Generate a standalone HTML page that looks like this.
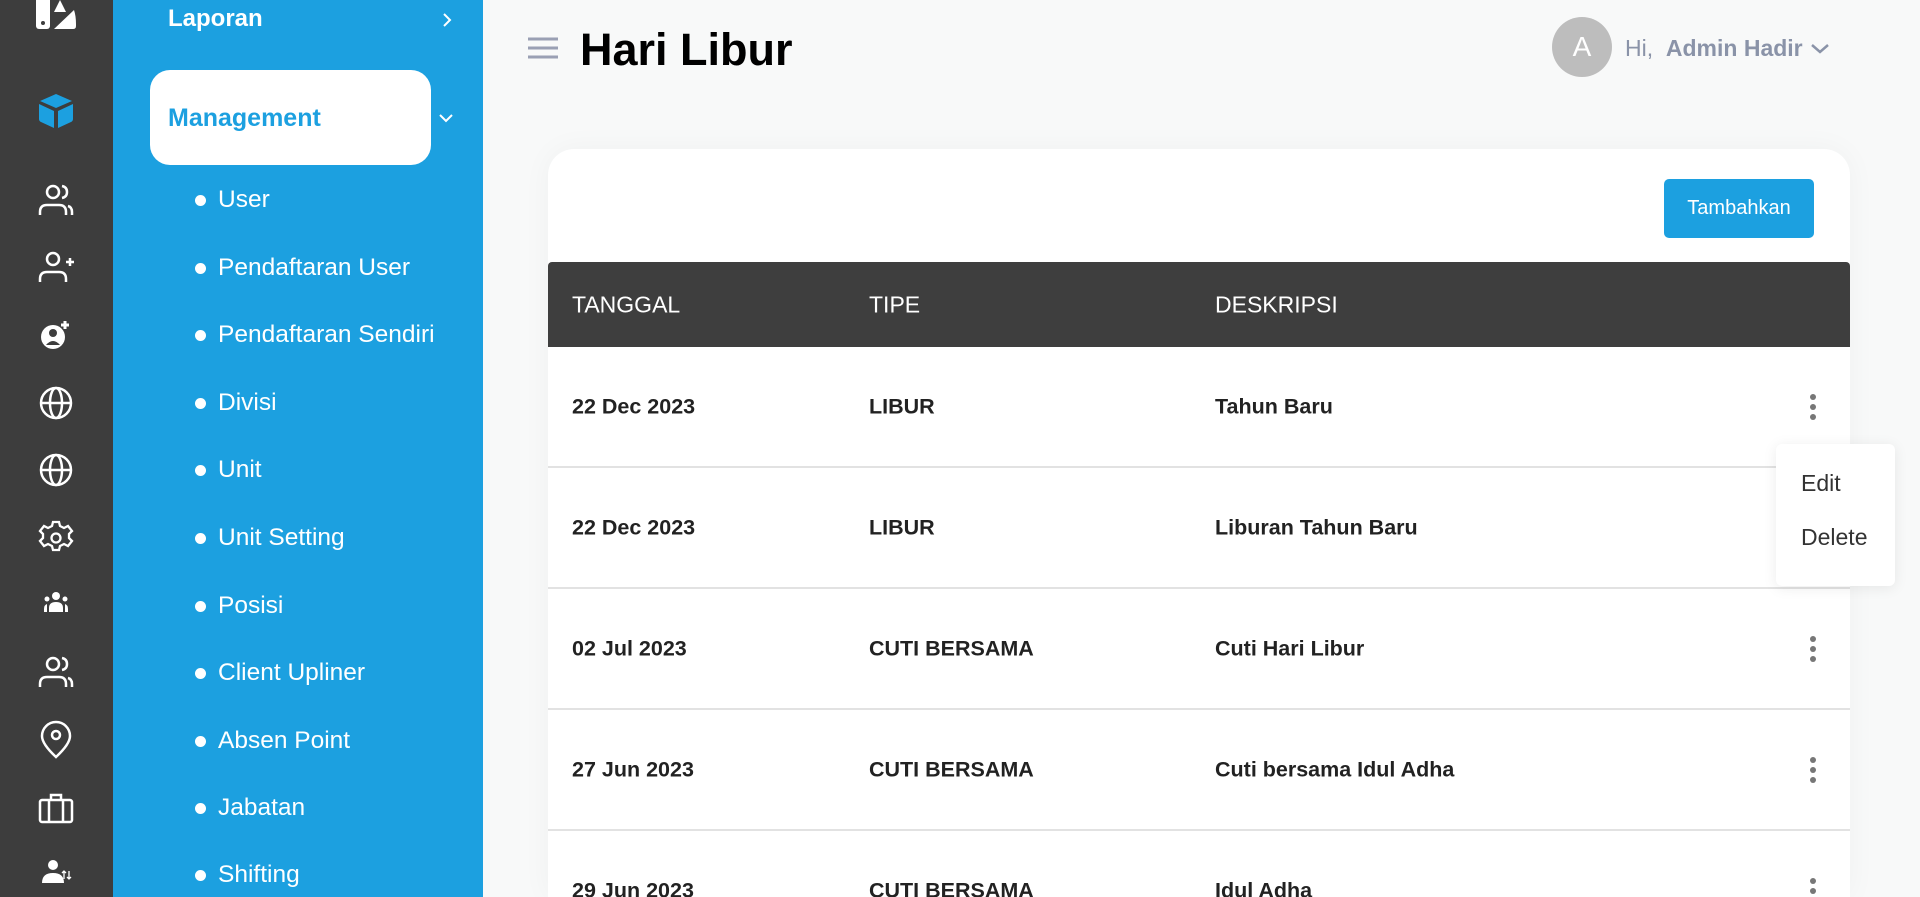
<!DOCTYPE html>
<html style="overflow:hidden;width:1920px;height:897px"><head><meta charset="utf-8"><style>
*{margin:0;padding:0;box-sizing:border-box}
body{width:1920px;height:897px;overflow:hidden;background:#f8f9f9;font-family:"Liberation Sans",sans-serif;position:relative}
.rail{position:absolute;left:0;top:0;width:113px;height:897px;background:#3d3d3d}
.rail svg{position:absolute;left:36px;width:40px;height:40px}
.side{position:absolute;left:113px;top:0;width:370px;height:897px;background:#1ca0e0;color:#fff}
.lap{position:absolute;left:55px;top:5px;font-size:24px;font-weight:bold}
.mg{position:absolute;left:37px;top:70px;width:281px;height:95px;background:#fff;border-radius:20px;color:#1ca0e0;font-size:25px;font-weight:bold;padding:34px 0 0 18px}
.item{position:absolute;left:105px;font-size:24.5px;line-height:28px}
.item:before{content:"";position:absolute;left:-23px;top:9px;width:11px;height:11px;border-radius:50%;background:#fff}
.card{position:absolute;left:548px;top:149px;width:1302px;height:748px;background:#fff;border-radius:26px 26px 0 0;box-shadow:0 0 30px rgba(0,0,0,.04);overflow:hidden}
.btn{position:absolute;left:1116px;top:30px;width:150px;height:59px;background:#1ca0e0;color:#fff;border-radius:5px;font-size:20px;text-align:center;line-height:59px}
.th{position:absolute;left:0;top:113px;width:1302px;height:85px;background:#3e3e3e;border-radius:4px 4px 0 0;color:#fff;font-size:23px}
.th span,.row span{position:absolute;top:50%;transform:translateY(-50%)}
.row{position:absolute;left:0;width:1302px;height:121px;border-bottom:2px solid #e2e2e2;font-size:21.5px;font-weight:bold;color:#222}
.keb{position:absolute;left:1262px;top:47px;width:6px}
.keb i{display:block;width:6px;height:6px;border-radius:50%;background:#777;margin-bottom:4px}
.menu{position:absolute;left:1776px;top:444px;width:119px;height:142px;background:#fff;border-radius:6px;box-shadow:0 2px 14px rgba(0,0,0,.08);font-size:23px;color:#333}
</style></head><body>
<div class="rail">
<svg style="top:-4px" viewBox="0 0 40 40"><rect x="0" y="0" width="14" height="33" rx="3" fill="#fff"/><circle cx="7" cy="27" r="2" fill="#3d3d3d"/><path d="M18 16 L24 4 L30 16 Z M18 33 L38 14 Q40 20 40 28 L40 30 Q40 33 37 33 Z" fill="#fff"/></svg>
<svg style="top:90px" viewBox="0 0 40 40"><path d="M20 4 L36 11 L20 18 L4 11Z" fill="#1ca0e0"/><path d="M3 14 L18 21 L18 38 L5 32 Q3 31 3 29Z M37 14 L22 21 L22 38 L35 32 Q37 31 37 29Z" fill="#1ca0e0"/></svg>
<svg style="top:180px" viewBox="0 0 40 40" fill="none" stroke="#fff" stroke-width="2.5"><circle cx="17" cy="12" r="6"/><path d="M4 35v-3q0-7 7-7h12q7 0 7 7v3M26 6q5 1 5 6t-5 6M36 35v-3q0-5-4-6"/></svg>
<svg style="top:248px" viewBox="0 0 40 40" fill="none" stroke="#fff" stroke-width="2.5"><circle cx="17" cy="11" r="6"/><path d="M4 34v-3q0-7 7-7h12q7 0 7 7v3M30 14h8M34 10v8"/></svg>
<svg style="top:315px" viewBox="0 0 40 40"><circle cx="17" cy="22" r="12" fill="#fff"/><circle cx="17" cy="18" r="4" fill="#3d3d3d"/><path d="M10 30q7-8 14 0" fill="#3d3d3d"/><path d="M29 6v8M25 10h8" stroke="#fff" stroke-width="3"/></svg>
<svg style="top:383px" viewBox="0 0 40 40" fill="none" stroke="#fff" stroke-width="2.5"><circle cx="20" cy="20" r="15"/><ellipse cx="20" cy="20" rx="6" ry="15"/><path d="M5 20h30"/></svg>
<svg style="top:450px" viewBox="0 0 40 40" fill="none" stroke="#fff" stroke-width="2.5"><circle cx="20" cy="20" r="15"/><ellipse cx="20" cy="20" rx="6" ry="15"/><path d="M5 20h30"/></svg>
<svg style="top:518px" viewBox="0 0 40 40" fill="none" stroke="#fff" stroke-width="2.3"><circle cx="20" cy="20" r="4.5"/><path d="M17 4h6l1 4 4 2 4-2 4 5-3 3v4l3 3-4 5-4-2-4 2-1 4h-6l-1-4-4-2-4 2-4-5 3-3v-4l-3-3 4-5 4 2 4-2z"/></svg>
<svg style="top:584px" viewBox="0 0 40 40" fill="#fff"><circle cx="20" cy="12" r="4"/><circle cx="11" cy="15" r="2.5"/><circle cx="29" cy="15" r="2.5"/><path d="M13 28v-4q0-6 7-6t7 6v4zM8 28v-3q0-4 3-5v8zM32 28v-3q0-4-3-5v8z"/></svg>
<svg style="top:652px" viewBox="0 0 40 40" fill="none" stroke="#fff" stroke-width="2.5"><circle cx="17" cy="12" r="6"/><path d="M4 35v-3q0-7 7-7h12q7 0 7 7v3M26 6q5 1 5 6t-5 6M36 35v-3q0-5-4-6"/></svg>
<svg style="top:720px" viewBox="0 0 40 40" fill="none" stroke="#fff" stroke-width="2.5"><path d="M20 37Q6 24 6 16a14 14 0 0 1 28 0q0 8-14 21z"/><circle cx="20" cy="15" r="4"/></svg>
<svg style="top:788px" viewBox="0 0 40 40" fill="none" stroke="#fff" stroke-width="2.5"><rect x="4" y="12" width="32" height="22" rx="2"/><path d="M15 12V7h10v5M13 12v22M27 12v22"/></svg>
<svg style="top:853px" viewBox="0 0 40 40" fill="#fff"><circle cx="17" cy="12" r="5"/><path d="M6 30q0-10 11-10t11 10z"/><path d="M28 18v8M26 20l2-2 2 2M33 18v8M31 24l2 2 2-2" stroke="#fff" stroke-width="1.3" fill="none"/></svg>
</div>
<div class="side">
<div class="lap">Laporan</div>
<svg style="position:absolute;left:327px;top:11px" width="14" height="18" viewBox="0 0 14 18" fill="none" stroke="#fff" stroke-width="2"><path d="M4 3l6 6-6 6"/></svg>
<div class="mg">Management</div>
<svg style="position:absolute;left:324px;top:112px" width="18" height="12" viewBox="0 0 18 12" fill="none" stroke="#fff" stroke-width="2"><path d="M3 3l6 6 6-6"/></svg>
<div class="item" style="top:186px">User</div>
<div class="item" style="top:254px">Pendaftaran User</div>
<div class="item" style="top:321px">Pendaftaran Sendiri</div>
<div class="item" style="top:389px">Divisi</div>
<div class="item" style="top:456px">Unit</div>
<div class="item" style="top:524px">Unit Setting</div>
<div class="item" style="top:592px">Posisi</div>
<div class="item" style="top:659px">Client Upliner</div>
<div class="item" style="top:727px">Absen Point</div>
<div class="item" style="top:794px">Jabatan</div>
<div class="item" style="top:861px">Shifting</div>
</div>
<svg style="position:absolute;left:528px;top:36px" width="30" height="24" viewBox="0 0 30 24" stroke="#9aa0b4" stroke-width="3"><path d="M0 3h30M0 12h30M0 21h30"/></svg>
<div style="position:absolute;left:580px;top:24px;font-size:45px;font-weight:bold;color:#000">Hari Libur</div>
<div style="position:absolute;left:1552px;top:17px;width:60px;height:60px;border-radius:50%;background:#bdbdbd;color:#fff;font-size:28px;text-align:center;line-height:60px">A</div>
<div style="position:absolute;left:1625px;top:35px;font-size:23px;color:#8a93a8">Hi,&nbsp; <b>Admin Hadir</b></div>
<svg style="position:absolute;left:1810px;top:42px" width="20" height="14" viewBox="0 0 20 14" fill="none" stroke="#8a93a8" stroke-width="2.5"><path d="M2 3l8 7 8-7"/></svg>
<div class="card">
<div class="btn">Tambahkan</div>
<div class="th"><span style="left:24px">TANGGAL</span><span style="left:321px">TIPE</span><span style="left:667px">DESKRIPSI</span></div>
<div class="row" style="top:198px"><span style="left:24px">22 Dec 2023</span><span style="left:321px">LIBUR</span><span style="left:667px">Tahun Baru</span><div class="keb"><i></i><i></i><i></i></div></div>
<div class="row" style="top:319px"><span style="left:24px">22 Dec 2023</span><span style="left:321px">LIBUR</span><span style="left:667px">Liburan Tahun Baru</span></div>
<div class="row" style="top:440px"><span style="left:24px">02 Jul 2023</span><span style="left:321px">CUTI BERSAMA</span><span style="left:667px">Cuti Hari Libur</span><div class="keb"><i></i><i></i><i></i></div></div>
<div class="row" style="top:561px"><span style="left:24px">27 Jun 2023</span><span style="left:321px">CUTI BERSAMA</span><span style="left:667px">Cuti bersama Idul Adha</span><div class="keb"><i></i><i></i><i></i></div></div>
<div class="row" style="top:682px"><span style="left:24px">29 Jun 2023</span><span style="left:321px">CUTI BERSAMA</span><span style="left:667px">Idul Adha</span><div class="keb"><i></i><i></i><i></i></div></div>
</div>
<div class="menu"><div style="position:absolute;left:25px;top:26px">Edit</div><div style="position:absolute;left:25px;top:80px">Delete</div></div>
</body></html>
